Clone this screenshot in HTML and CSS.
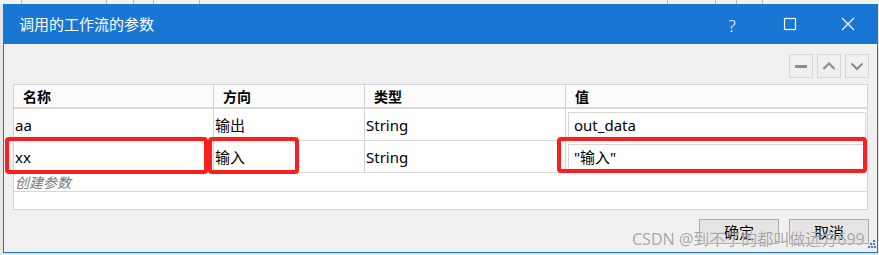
FILE: index.html
```html
<!DOCTYPE html>
<html lang="zh">
<head>
<meta charset="utf-8">
<title>调用的工作流的参数</title>
<link rel="stylesheet" href="styles.css">
</head>
<body>
<div class="topstrip">
  <span class="ts" style="width:22px"></span>
  <span class="ts" style="width:85px"></span>
  <span class="ts" style="width:27px"></span>
  <span class="ts" style="width:20px"></span>
  <span class="ts" style="width:46px"></span>
  <span class="ts" style="width:468px"></span>
  <span class="ts" style="width:48px"></span>
  <span class="ts" style="width:21px"></span>
  <span class="ts" style="width:26px"></span>
</div>
<div class="stage">
  <div class="dialog">
    <div class="titlebar">
      <div class="title">调用的工作流的参数</div>
      <div class="ctrls">
        <div class="ctrl help">?</div>
        <div class="ctrl">
          <svg width="14" height="14" viewBox="0 0 14 14"><rect x="1.5" y="1.5" width="11" height="11" fill="none" stroke="#fff" stroke-width="1.2"/></svg>
        </div>
        <div class="ctrl">
          <svg width="14" height="14" viewBox="0 0 14 14"><path d="M1 1 L13 13 M13 1 L1 13" stroke="#fff" stroke-width="1.2" fill="none"/></svg>
        </div>
      </div>
    </div>
    <div class="body">
      <div class="toolbar">
        <div class="tb"><svg width="14" height="14" viewBox="0 0 14 14"><rect x="1" y="6" width="12" height="3" fill="#8c8c8c"/></svg></div>
        <div class="tb"><svg width="14" height="14" viewBox="0 0 14 14"><path d="M1.5 10 L7 4.5 L12.5 10" stroke="#8c8c8c" stroke-width="2" fill="none"/></svg></div>
        <div class="tb"><svg width="14" height="14" viewBox="0 0 14 14"><path d="M1.5 4.5 L7 10 L12.5 4.5" stroke="#8c8c8c" stroke-width="2" fill="none"/></svg></div>
      </div>
      <div class="grid">
        <div class="row head">
          <div class="cell">名称</div>
          <div class="cell">方向</div>
          <div class="cell">类型</div>
          <div class="cell last">值</div>
        </div>
        <div class="row data">
          <div class="cell">aa</div>
          <div class="cell">输出</div>
          <div class="cell">String</div>
          <div class="cell last"><div class="valbox">out_data</div></div>
        </div>
        <div class="row data">
          <div class="cell">xx</div>
          <div class="cell">输入</div>
          <div class="cell">String</div>
          <div class="cell last"><div class="valbox">"输入"</div></div>
        </div>
        <div class="create">创建参数</div>
        <div class="filler"></div>
      </div>
      <div class="footer">
        <div class="btn">确定</div>
        <div class="btn">取消</div>
      </div>
    </div>
  </div>
</div>
<div class="mark m1"></div>
<div class="mark m2"></div>
<div class="mark m3"></div>
<div class="watermark">CSDN @到不了的都叫做远方699</div>
<svg class="grip" width="8" height="10" viewBox="0 0 8 10">
  <rect x="5" y="0" width="2" height="2" fill="#3a7bd5"/>
  <rect x="2" y="3" width="2" height="2" fill="#3a7bd5"/>
  <rect x="5" y="3" width="2" height="2" fill="#3a7bd5"/>
  <rect x="0" y="6" width="2" height="2" fill="#3a7bd5"/>
  <rect x="3" y="6" width="2" height="2" fill="#3a7bd5"/>
  <rect x="6" y="6" width="2" height="2" fill="#3a7bd5"/>
</svg>
</body>
</html>
```

FILE: styles.css
```css
* { box-sizing: border-box; }
html, body {
  margin: 0;
  padding: 0;
}
body {
  width: 879px;
  height: 255px;
  overflow: hidden;
  position: relative;
  background: #e6e6e6;
  font-family: "Noto Sans", "Noto Sans CJK SC", sans-serif;
  font-size: 15px;
  color: #000;
}
.topstrip {
  display: flex;
  height: 4px;
  background: #f2f2f2;
}
.ts {
  height: 4px;
  border-right: 1px solid #b8b8b8;
  flex: none;
}
.stage {
  display: flex;
  padding-left: 3px;
}
.dialog {
  width: 875px;
  height: 249px;
  border: 1px solid #1a73cf;
  border-top: 0;
  background: #f0f0f0;
  display: flex;
  flex-direction: column;
}
.titlebar {
  height: 40px;
  margin: 0 -1px;
  padding-left: 16px;
  background: #1976d2;
  color: #fff;
  display: flex;
  align-items: center;
  justify-content: space-between;
}
.title {
  font-family: "Noto Sans CJK SC", sans-serif;
  font-size: 15px;
  line-height: 40px;
}
.ctrls {
  display: flex;
  height: 40px;
  margin-right: 1px;
}
.ctrl {
  width: 58px;
  height: 40px;
  display: flex;
  align-items: center;
  justify-content: center;
}
.help {
  font-family: "Noto Sans", sans-serif;
  font-size: 17px;
  font-weight: 300;
  padding-top: 2px;
}
.body {
  flex: 1;
  padding: 10px 8px 0 9px;
  display: flex;
  flex-direction: column;
}
.toolbar {
  display: flex;
  justify-content: flex-end;
  gap: 4px;
  height: 24px;
}
.tb {
  width: 24px;
  height: 24px;
  border: 1px solid #d6d6d6;
  display: flex;
  align-items: center;
  justify-content: center;
}
.grid {
  margin-top: 6px;
  margin-right: 1px;
  border: 1px solid #d2d2d2;
  background: #fff;
  display: flex;
  flex-direction: column;
}
.row {
  display: grid;
  grid-template-columns: 200px 151px 201px 1fr;
}
.row.head {
  height: 24px;
  border-bottom: 2px solid #dadada;
  background: #fbfbfb;
}
.row.data {
  height: 32px;
  border-bottom: 1px solid #dadada;
}
.cell {
  border-right: 1px solid #d2d2d2;
  display: flex;
  align-items: center;
  padding-left: 1px;
  white-space: nowrap;
}
.cell.last {
  border-right: 0;
  padding-left: 2px;
  padding-right: 1px;
}
.head .cell {
  font-family: "Noto Sans CJK SC", sans-serif;
  font-weight: bold;
  font-size: 14px;
  padding-left: 9px;
}
.valbox {
  width: 100%;
  height: 26px;
  border: 1px solid #d6d6d6;
  background: #fff;
  display: flex;
  align-items: center;
  padding-left: 5px;
}
.data .cell:last-child .valbox { margin-top: 0; }
.create {
  height: 19px;
  border-bottom: 1px solid #d6d6d6;
  padding-left: 1px;
  font-style: italic;
  color: #7a7a7a;
  font-size: 14px;
  line-height: 18px;
  font-family: "Noto Sans CJK SC", sans-serif;
}
.filler {
  height: 17px;
}
.footer {
  margin-top: 9px;
  display: flex;
  justify-content: flex-end;
  gap: 10px;
}
.btn {
  width: 80px;
  height: 25px;
  border: 1px solid #adadad;
  background: #e5e5e5;
  display: flex;
  align-items: center;
  justify-content: center;
  font-family: "Noto Sans CJK SC", sans-serif;
  font-size: 15px;
}
.mark {
  position: absolute;
  border: 4px solid #fb1e1e;
  border-radius: 4px;
}
.m1 { left: 5px; top: 137px; width: 203px; height: 37px; }
.m2 { left: 208px; top: 137px; width: 91px; height: 37px; }
.m3 { left: 557px; top: 137px; width: 310px; height: 36px; }
.watermark {
  position: absolute;
  left: 632px;
  top: 229px;
  font-size: 16px;
  line-height: 20px;
  color: rgba(150, 150, 150, 0.85);
  text-shadow: 0 0 1px #fff;
  white-space: nowrap;
  font-family: "Noto Sans", "Noto Sans CJK SC", sans-serif;
}
.grip {
  position: absolute;
  left: 868px;
  top: 240px;
}
```
